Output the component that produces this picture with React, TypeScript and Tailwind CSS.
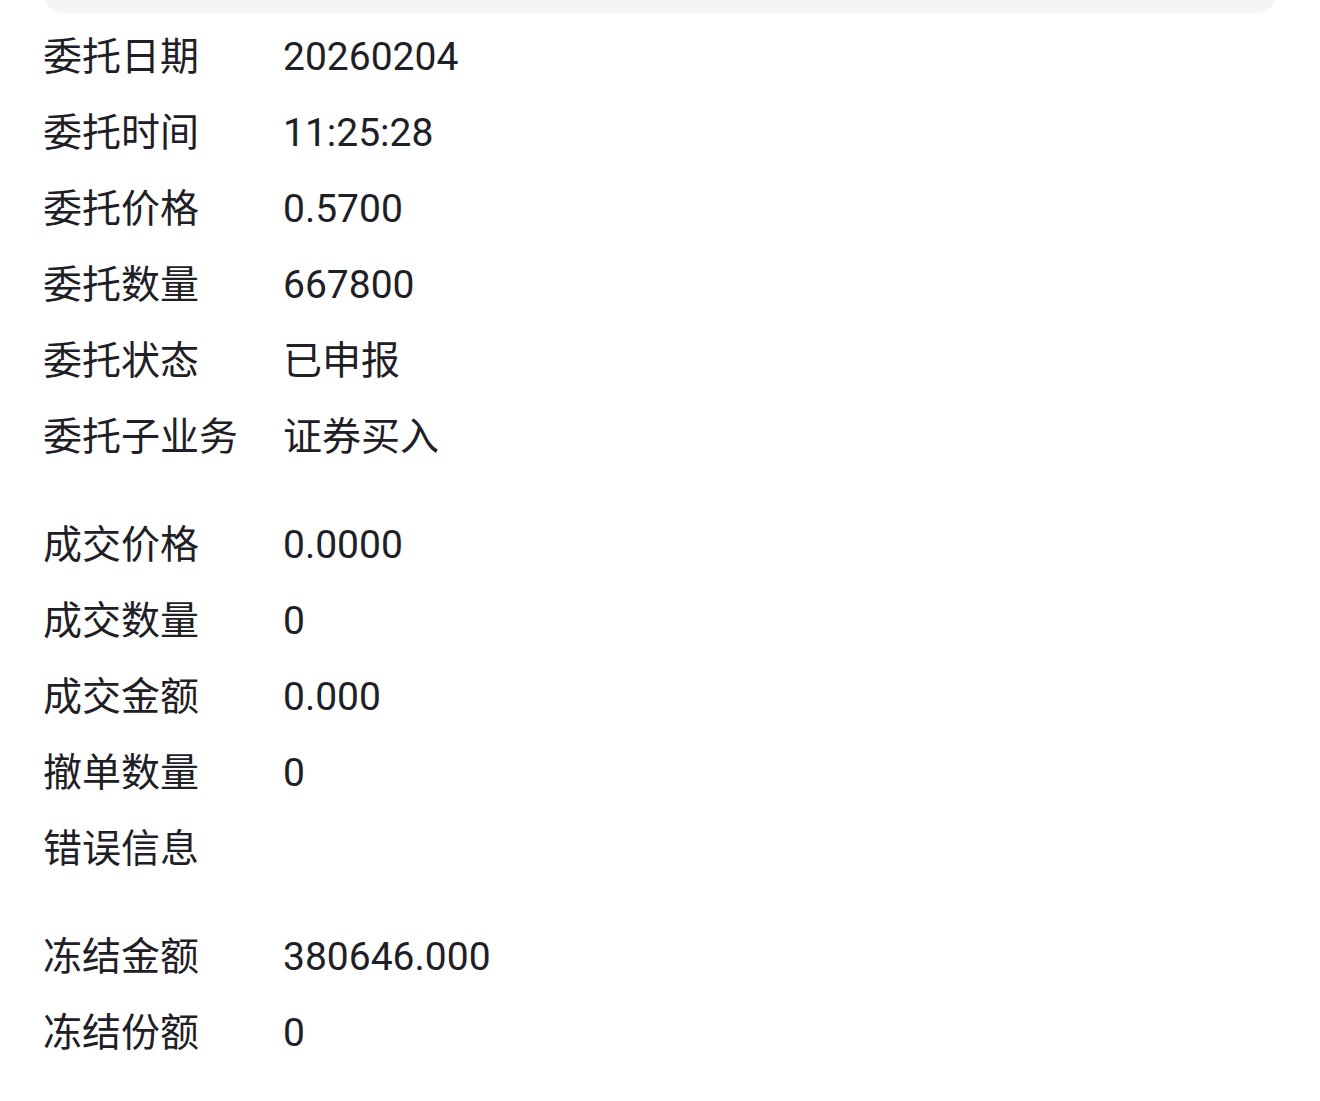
import React from "react";

type Row = { label: string; value: string };

const groups: Row[][] = [
  [
    { label: "委托日期", value: "20260204" },
    { label: "委托时间", value: "11:25:28" },
    { label: "委托价格", value: "0.5700" },
    { label: "委托数量", value: "667800" },
    { label: "委托状态", value: "已申报" },
    { label: "委托子业务", value: "证券买入" },
  ],
  [
    { label: "成交价格", value: "0.0000" },
    { label: "成交数量", value: "0" },
    { label: "成交金额", value: "0.000" },
    { label: "撤单数量", value: "0" },
    { label: "错误信息", value: "" },
  ],
  [
    { label: "冻结金额", value: "380646.000" },
    { label: "冻结份额", value: "0" },
  ],
];

export default function App() {
  return (
    <main
      className="min-h-[1101px] w-full overflow-hidden bg-white px-[43px] text-[#1e2026]"
      style={{ fontFamily: 'Roboto, "Noto Sans CJK SC", sans-serif' }}
    >
      <div className="-mt-[27px] h-[40px] rounded-[24px] bg-[#f5f5f5]" />

      <div className="mt-[6px] flex flex-col gap-[32px]">
        {groups.map((g, gi) => (
          <div key={gi} className="flex flex-col">
            {g.map((r) => (
              <div key={r.label} className="flex h-[76px] items-center text-[39px] leading-none">
                <div className="w-[240px] shrink-0">{r.label}</div>
                <div>{r.value}</div>
              </div>
            ))}
          </div>
        ))}
      </div>
    </main>
  );
}
